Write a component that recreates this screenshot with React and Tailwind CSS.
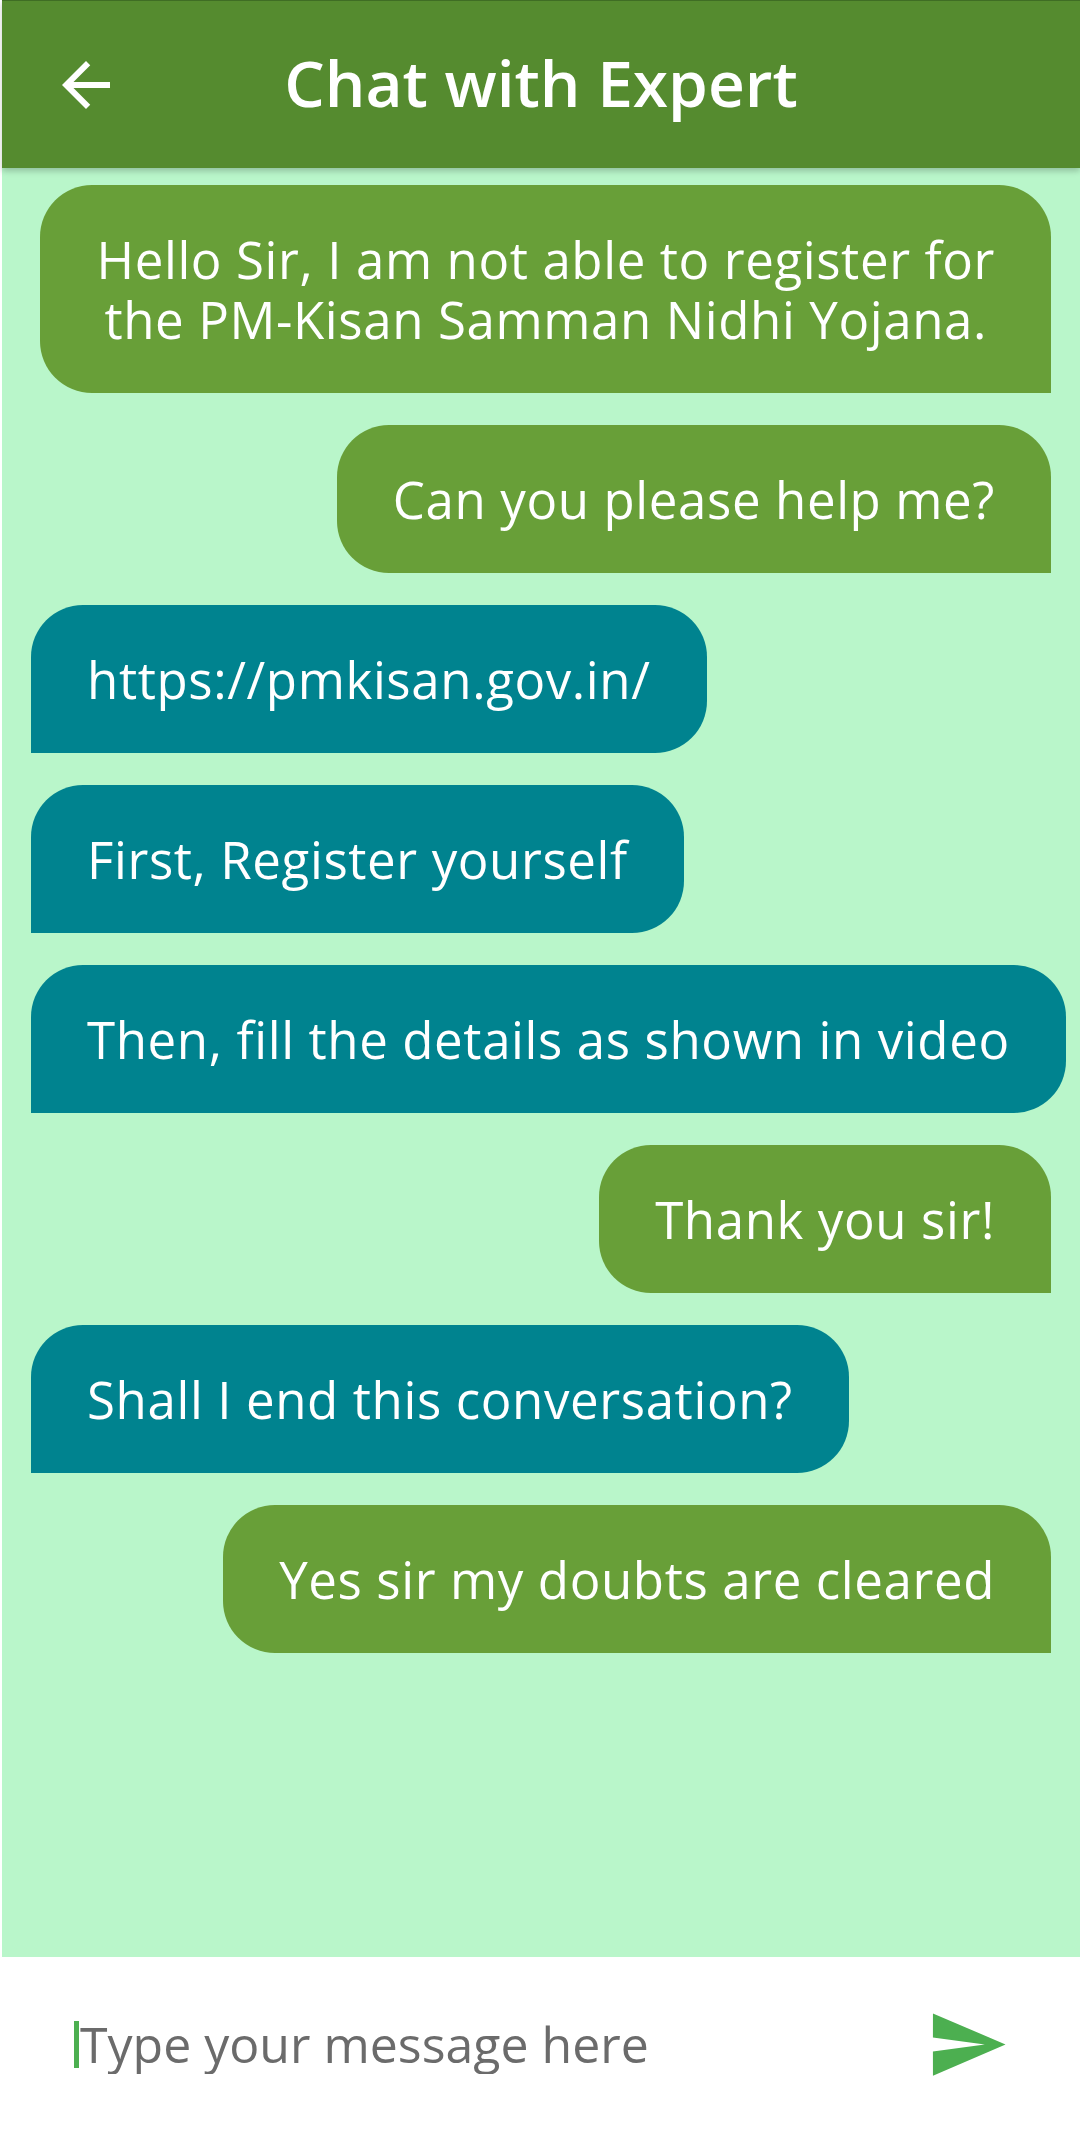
import React from 'react';

const messages = [
  { from: 'me', lines: ['Hello Sir, I am not able to register for', 'the PM-Kisan Samman Nidhi Yojana.'] },
  { from: 'me', lines: ['Can you please help me?'] },
  { from: 'expert', lines: ['https://pmkisan.gov.in/'] },
  { from: 'expert', lines: ['First, Register yourself'] },
  { from: 'expert', lines: ['Then, fill the details as shown in video'] },
  { from: 'me', lines: ['Thank you sir!'] },
  { from: 'expert', lines: ['Shall I end this conversation?'] },
  { from: 'me', lines: ['Yes sir my doubts are cleared'] },
];

const Bubble = ({ from, lines }) => {
  const mine = from === 'me';
  return (
    <div
      className={`px-[56px] py-[44px] text-center whitespace-nowrap text-white text-[51px] leading-[60px] tracking-[0.012em] font-medium ${
        mine
          ? 'self-end mr-[29px] bg-[#689F38] rounded-[52px] rounded-br-none'
          : 'self-start ml-[29px] bg-[#00838F] rounded-[52px] rounded-bl-none'
      }`}
    >
      {lines.map((l, i) => (
        <React.Fragment key={i}>
          {i > 0 && <br />}
          {l}
        </React.Fragment>
      ))}
    </div>
  );
};

const App = () => {
  return (
    <div className="min-h-screen h-[2131px] bg-white pl-[2px] flex flex-col font-['Open_Sans',sans-serif]">
      {/* top bar */}
      <header className="relative z-10 h-[168px] shrink-0 bg-[#558B2F] border-t border-[#3f6d24] shadow-[0_3px_6px_rgba(0,0,0,0.22)] grid grid-cols-[1fr_auto_1fr] items-center">
        <button className="ml-[48px] w-[72px] h-[72px] justify-self-start text-white">
          <svg viewBox="0 0 24 24" className="w-[72px] h-[72px]" fill="currentColor">
            <path d="M20 11H7.83l5.59-5.59L12 4l-8 8 8 8 1.41-1.41L7.83 13H20v-2z" />
          </svg>
        </button>
        <h1 className="text-white text-[64px] leading-none font-semibold pb-[4px]">Chat with Expert</h1>
        <div />
      </header>

      {/* chat area */}
      <main className="flex-1 bg-[#B9F6CA] flex flex-col gap-8 pt-[17px] overflow-hidden">
        {messages.map((m, i) => (
          <Bubble key={i} {...m} />
        ))}
      </main>

      {/* composer */}
      <footer className="h-[174px] shrink-0 bg-white flex items-center">
        <div className="flex-1 flex items-center ml-[72px]">
          <span className="w-[5px] h-[47px] bg-[#4CAF50] mr-[1px]" />
          <input
            type="text"
            placeholder="Type your message here"
            className="flex-1 bg-transparent outline-none text-[50px] leading-[60px] text-[#333] placeholder:text-[#6b6b6b] caret-transparent"
          />
        </div>
        <button className="mr-[71px] ml-4 w-[83px] h-[83px] text-[#4CAF50]">
          <svg viewBox="0 0 24 24" className="w-[83px] h-[83px]" fill="currentColor">
            <path d="M2.01 21L23 12 2.01 3 2 10l15 2-15 2z" />
          </svg>
        </button>
      </footer>
    </div>
  );
};

export default App;
